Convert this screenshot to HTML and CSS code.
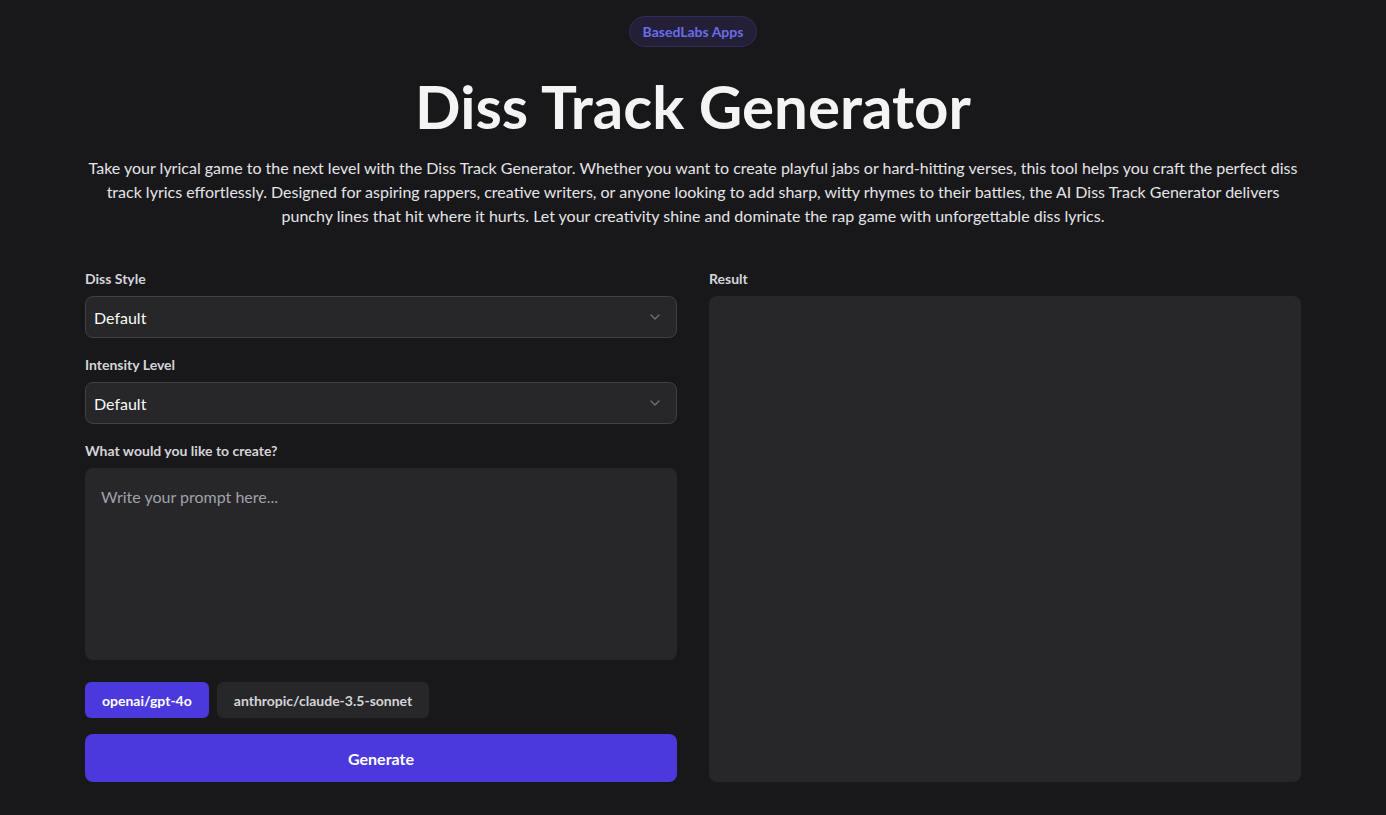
FILE: index.html
```html
<!DOCTYPE html>
<html lang="en">
<head>
    <meta charset="UTF-8">
    <meta name="viewport" content="width=device-width, initial-scale=1.0">
    <title>Diss Track Generator</title>
    <link rel="stylesheet" href="styles.css">
</head>
<body>
    <div class="page">
        <header class="hero">
            <span class="badge">BasedLabs Apps</span>
            <h1>Diss Track Generator</h1>
            <p class="intro">Take your lyrical game to the next level with the Diss Track Generator. Whether you want to create playful jabs or hard-hitting verses, this tool helps you craft the perfect diss track lyrics effortlessly. Designed for aspiring rappers, creative writers, or anyone looking to add sharp, witty rhymes to their battles, the AI Diss Track Generator delivers punchy lines that hit where it hurts. Let your creativity shine and dominate the rap game with unforgettable diss lyrics.</p>
        </header>

        <main class="tool">
            <form class="form" onsubmit="return false">
                <div class="field">
                    <label for="style">Diss Style</label>
                    <div class="select-wrap">
                        <select id="style">
                            <option>Default</option>
                            <option>Playful</option>
                            <option>Savage</option>
                        </select>
                        <svg class="chevron" viewBox="0 0 20 20" width="16" height="16"><path d="M5 7.5l5 5 5-5" fill="none" stroke="currentColor" stroke-width="1.6" stroke-linecap="round" stroke-linejoin="round"/></svg>
                    </div>
                </div>

                <div class="field">
                    <label for="intensity">Intensity Level</label>
                    <div class="select-wrap">
                        <select id="intensity">
                            <option>Default</option>
                            <option>Mild</option>
                            <option>Brutal</option>
                        </select>
                        <svg class="chevron" viewBox="0 0 20 20" width="16" height="16"><path d="M5 7.5l5 5 5-5" fill="none" stroke="currentColor" stroke-width="1.6" stroke-linecap="round" stroke-linejoin="round"/></svg>
                    </div>
                </div>

                <div class="field">
                    <label for="prompt">What would you like to create?</label>
                    <textarea id="prompt" placeholder="Write your prompt here..."></textarea>
                </div>

                <div class="models">
                    <button type="button" class="model active">openai/gpt-4o</button>
                    <button type="button" class="model">anthropic/claude-3.5-sonnet</button>
                </div>

                <button type="submit" class="generate">Generate</button>
            </form>

            <section class="result">
                <label>Result</label>
                <div class="result-box"></div>
            </section>
        </main>
    </div>
</body>
</html>
```

FILE: styles.css
```css
* {
    box-sizing: border-box;
}
body {
    margin: 0;
    background-color: #18181b;
    color: #f4f4f5;
    font-family: Lato, "Noto Sans", sans-serif;
}
.page {
    max-width: 1280px;
    margin: 0 auto;
    padding: 16px 32px 33px;
}
.hero {
    display: flex;
    flex-direction: column;
    align-items: center;
    text-align: center;
}
.badge {
    display: inline-block;
    padding: 6px 13px;
    border: 1px solid #302d5c;
    border-radius: 999px;
    background-color: #221f36;
    color: #6b6cec;
    font-size: 14px;
    font-weight: 700;
    line-height: 17px;
}
h1 {
    margin: 24px 0 0;
    font-size: 60px;
    font-weight: 700;
    line-height: 70px;
    color: #f4f4f5;
}
.intro {
    margin: 15px 0 0;
    font-size: 16px;
    line-height: 24px;
    color: #e4e4e7;
}
.tool {
    display: grid;
    grid-template-columns: 1fr 1fr;
    gap: 32px;
    margin-top: 42px;
}
.form {
    display: flex;
    flex-direction: column;
}
.field {
    display: flex;
    flex-direction: column;
    margin-bottom: 18px;
}
label {
    display: block;
    margin-bottom: 8px;
    font-size: 14px;
    font-weight: 700;
    line-height: 18px;
    color: #d4d4d8;
}
.select-wrap {
    position: relative;
}
select {
    width: 100%;
    height: 42px;
    padding: 0 36px 0 8px;
    border: 1px solid #3f3f46;
    border-radius: 8px;
    background-color: #27272a;
    color: #fafafa;
    font-family: inherit;
    font-size: 16px;
    appearance: none;
    -webkit-appearance: none;
}
.chevron {
    position: absolute;
    right: 14px;
    top: 13px;
    color: #71717a;
    pointer-events: none;
}
textarea {
    height: 192px;
    padding: 18px 16px;
    border: none;
    border-radius: 8px;
    background-color: #27272a;
    color: #fafafa;
    font-family: inherit;
    font-size: 16px;
    line-height: 22px;
    resize: none;
}
textarea::placeholder {
    color: #a1a1aa;
}
.models {
    display: flex;
    gap: 8px;
    margin-top: 4px;
}
.model {
    height: 36px;
    padding: 0 17px;
    border: none;
    border-radius: 6px;
    background-color: #27272a;
    color: #d4d4d8;
    font-family: inherit;
    font-size: 14px;
    font-weight: 700;
    cursor: pointer;
}
.model.active {
    background-color: #4b39dd;
    color: #ffffff;
}
.generate {
    height: 48px;
    margin-top: 16px;
    border: none;
    border-radius: 8px;
    background-color: #4b39dd;
    color: #ffffff;
    font-family: inherit;
    font-size: 16px;
    font-weight: 700;
    cursor: pointer;
}
.result {
    display: flex;
    flex-direction: column;
}
.result-box {
    flex: 1;
    border-radius: 8px;
    background-color: #27272a;
}
```
